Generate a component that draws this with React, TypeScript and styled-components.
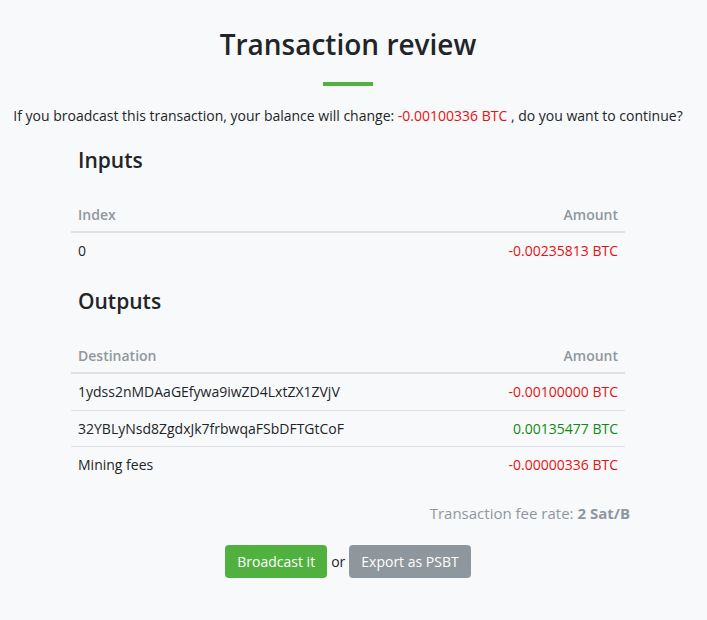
import React from 'react';
import styled, { createGlobalStyle } from 'styled-components';

const GlobalStyle = createGlobalStyle`
  html, body {
    margin: 0;
    padding: 0;
    background: #f8f9fa;
  }
  body {
    font-family: "Open Sans", "Liberation Sans", sans-serif;
    font-size: 14px;
    color: #212529;
  }
`;

const inputs = [{ index: '0', amount: '-0.00235813 BTC', positive: false }];

const outputs = [
  { destination: '1ydss2nMDAaGEfywa9iwZD4LxtZX1ZVjV', amount: '-0.00100000 BTC', positive: false },
  { destination: '32YBLyNsd8ZgdxJk7frbwqaFSbDFTGtCoF', amount: '0.00135477 BTC', positive: true },
  { destination: 'Mining fees', amount: '-0.00000336 BTC', positive: false },
];

export default function App() {
  return (
    <Page>
      <GlobalStyle />
      <Title>Transaction review</Title>
      <Divider />
      <Intro>
        If you broadcast this transaction, your balance will change: <Amount>-0.00100336 BTC</Amount> , do you want to continue?
      </Intro>

      <Section>
        <SectionTitle>Inputs</SectionTitle>
        <Table>
          <thead>
            <tr>
              <Th>Index</Th>
              <Th align="right">Amount</Th>
            </tr>
          </thead>
          <tbody>
            {inputs.map((row) => (
              <tr key={row.index}>
                <Td>{row.index}</Td>
                <Td align="right">
                  <Amount $positive={row.positive}>{row.amount}</Amount>
                </Td>
              </tr>
            ))}
          </tbody>
        </Table>

        <SectionTitle>Outputs</SectionTitle>
        <Table>
          <thead>
            <tr>
              <Th>Destination</Th>
              <Th align="right">Amount</Th>
            </tr>
          </thead>
          <tbody>
            {outputs.map((row) => (
              <tr key={row.destination}>
                <Td>{row.destination}</Td>
                <Td align="right">
                  <Amount $positive={row.positive}>{row.amount}</Amount>
                </Td>
              </tr>
            ))}
          </tbody>
        </Table>
      </Section>

      <FeeRate>
        Transaction fee rate: <strong>2 Sat/B</strong>
      </FeeRate>

      <Actions>
        <Button $variant="primary">Broadcast it</Button>
        <span>or</span>
        <Button $variant="secondary">Export as PSBT</Button>
      </Actions>
    </Page>
  );
}

const Page = styled.div`
  width: 696px;
  padding-top: 28px;
  padding-bottom: 40px;
  display: flex;
  flex-direction: column;
  align-items: center;
`;

const Title = styled.h2`
  margin: 0;
  font-size: 28px;
  font-weight: 600;
  line-height: 1.2;
  color: #212529;
`;

const Divider = styled.hr`
  width: 50px;
  height: 4px;
  border: 0;
  margin: 20px 0 0;
  background: #51b13e;
`;

const Intro = styled.p`
  margin: 20px 0 0;
  font-size: 14px;
  line-height: 20px;
  text-align: center;
  white-space: nowrap;
`;

const Amount = styled.span<{ $positive?: boolean }>`
  color: ${(p) => (p.$positive ? '#108a10' : '#e81010')};
`;

const Section = styled.div`
  align-self: stretch;
  padding: 0 71px;
  margin-top: 7px;
`;

const SectionTitle = styled.h3`
  margin: 17px 0 0;
  padding: 0 7px;
  font-size: 21px;
  font-weight: 600;
  line-height: 30px;
  height: 30px;
  &:first-child {
    margin-top: 12px;
  }
`;

const Table = styled.table`
  width: 100%;
  border-collapse: collapse;
  margin-top: 22px;
`;

const Th = styled.th<{ align?: string }>`
  text-align: ${(p) => p.align || 'left'};
  padding: 8px 7px 6.5px;
  font-weight: 600;
  color: #8f979e;
  line-height: 20px;
  border-bottom: 2px solid #dee2e6;
`;

const Td = styled.td<{ align?: string }>`
  text-align: ${(p) => p.align || 'left'};
  padding: 8px 7px 7.5px;
  line-height: 20px;
  border-top: 1px solid #dee2e6;
  tr:first-child > & {
    border-top: 0;
  }
`;

const FeeRate = styled.div`
  align-self: stretch;
  text-align: right;
  padding-right: 66px;
  margin-top: 20px;
  font-size: 15px;
  color: #8f979e;
  line-height: 20px;
  strong {
    font-weight: 700;
  }
`;

const Actions = styled.div`
  margin-top: 22px;
  display: flex;
  align-items: center;
  gap: 4px;
`;

const Button = styled.button<{ $variant: 'primary' | 'secondary' }>`
  font-family: inherit;
  font-size: 14px;
  font-weight: 500;
  line-height: 21px;
  padding: 6px 12px;
  border: 0;
  border-radius: 4px;
  color: #fff;
  cursor: pointer;
  background: ${(p) => (p.$variant === 'primary' ? '#51b13e' : '#8f979e')};
`;
